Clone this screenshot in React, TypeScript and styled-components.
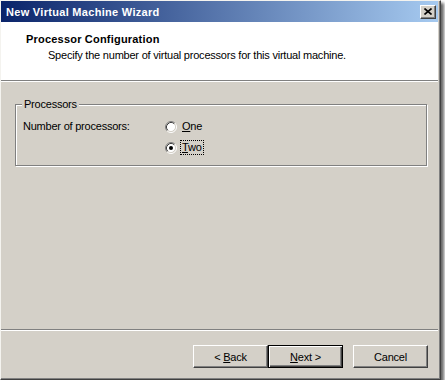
import * as React from 'react'
import styled, { createGlobalStyle } from 'styled-components'

const GlobalStyle = createGlobalStyle`
  html, body {
    margin: 0;
    padding: 0;
    background: #fff;
  }
  body {
    font-family: 'Liberation Sans', Arial, sans-serif;
    font-size: 11px;
    letter-spacing: -0.22px;
    color: #000;
  }
`

const Window = styled.div`
  width: 441px;
  height: 380px;
  box-sizing: border-box;
  display: flex;
  flex-direction: column;
  background: #d4d0c8;
  border-style: solid;
  border-width: 1px;
  border-color: #f4f3ef #404040 #404040 #f4f3ef;
  box-shadow: inset -1px -1px 0 #808080, 3px 3px 3px rgba(0, 0, 0, 0.6);
  padding: 0 2px 2px 0;
`
const TitleBar = styled.div`
  height: 21px;
  display: flex;
  align-items: center;
  justify-content: space-between;
  padding: 0 2px 0 5px;
  background: linear-gradient(to right, #0a246a, #a6caf0);
`
const TitleText = styled.span`
  color: #fff;
  font-weight: bold;
  font-size: 11px;
  letter-spacing: 0.3px;
`
const CloseButton = styled.div`
  width: 16px;
  height: 14px;
  box-sizing: border-box;
  display: flex;
  align-items: center;
  justify-content: center;
  background: #d4d0c8;
  border: 1px solid;
  border-color: #fff #404040 #404040 #fff;
  box-shadow: inset -1px -1px 0 #808080;
`
const Header = styled.div`
  height: 58px;
  box-sizing: border-box;
  background: #fff;
  padding: 11px 0 0 25px;
`
const HeaderTitle = styled.div`
  font-weight: bold;
  line-height: 13px;
  letter-spacing: 0.2px;
`
const HeaderSub = styled.div`
  line-height: 13px;
  margin: 3px 0 0 22px;
`
const Separator = styled.div`
  border-top: 1px solid #808080;
  border-bottom: 1px solid #fff;
`
const Body = styled.div`
  flex: 1;
  padding: 22px 11px 0 14px;
`
const Group = styled.div`
  position: relative;
  height: 62px;
  box-sizing: border-box;
  border: 1px solid #808080;
  box-shadow: inset 1px 1px 0 #fff, 1px 1px 0 #fff;
  display: grid;
  grid-template-columns: 142px 1fr;
  padding: 13px 0 0 7px;
`
const Legend = styled.span`
  position: absolute;
  top: -7px;
  left: 6px;
  padding: 0 2px;
  background: #d4d0c8;
  line-height: 13px;
`
const FieldLabel = styled.div`
  line-height: 17px;
`
const Options = styled.div`
  display: flex;
  flex-direction: column;
  gap: 4px;
`
const Option = styled.label`
  display: flex;
  align-items: center;
  height: 17px;
  gap: 4px;
`
const OptionText = styled.span<{ $focused?: boolean }>`
  line-height: 13px;
  padding: 0 1px;
  outline: ${(p) => (p.$focused ? '1px dotted #000' : 'none')};
`
const Footer = styled.div`
  display: flex;
  justify-content: flex-end;
  padding: 14px 10px 9px 0;
`
const Button = styled.div<{ $default?: boolean; $gap?: number }>`
  width: 75px;
  height: 23px;
  box-sizing: border-box;
  display: flex;
  align-items: center;
  justify-content: center;
  margin-left: ${(p) => p.$gap ?? 0}px;
  border: 1px solid;
  border-color: ${(p) => (p.$default ? '#000' : '#fff #404040 #404040 #fff')};
  box-shadow: ${(p) =>
    p.$default
      ? 'inset 1px 1px 0 #fff, inset -1px -1px 0 #404040, inset -2px -2px 0 #808080'
      : 'inset -1px -1px 0 #808080'};
`
const Key = styled.span`
  text-decoration: underline;
`

const Radio = ({ checked }: { checked?: boolean }) => (
  <svg width='12' height='12' viewBox='0 0 12 12'>
    <circle cx='6' cy='6' r='4.5' fill='#fff' />
    <path d='M2.11 9.89A5.5 5.5 0 0 1 9.89 2.11' stroke='#808080' fill='none' />
    <path d='M9.89 2.11A5.5 5.5 0 0 1 2.11 9.89' stroke='#fff' fill='none' />
    <path d='M2.82 9.18A4.5 4.5 0 0 1 9.18 2.82' stroke='#404040' fill='none' />
    <path d='M9.18 2.82A4.5 4.5 0 0 1 2.82 9.18' stroke='#d4d0c8' fill='none' />
    {checked ? <circle cx='6' cy='6' r='2' fill='#000' /> : null}
  </svg>
)

const App = () => {
  const [count, setCount] = React.useState(2)

  return (
    <>
      <GlobalStyle />
      <Window>
        <TitleBar>
          <TitleText>New Virtual Machine Wizard</TitleText>
          <CloseButton>
            <svg width='8' height='7' viewBox='0 0 8 7'>
              <path d='M0.5 0.5L7.5 6.5M7.5 0.5L0.5 6.5' stroke='#000' strokeWidth='1.6' />
            </svg>
          </CloseButton>
        </TitleBar>
        <Header>
          <HeaderTitle>Processor Configuration</HeaderTitle>
          <HeaderSub>Specify the number of virtual processors for this virtual machine.</HeaderSub>
        </Header>
        <Separator />
        <Body>
          <Group>
            <Legend>Processors</Legend>
            <FieldLabel>Number of processors:</FieldLabel>
            <Options>
              <Option onClick={() => setCount(1)}>
                <Radio checked={count === 1} />
                <OptionText $focused={count === 1}>
                  <Key>O</Key>ne
                </OptionText>
              </Option>
              <Option onClick={() => setCount(2)}>
                <Radio checked={count === 2} />
                <OptionText $focused={count === 2}>
                  <Key>T</Key>wo
                </OptionText>
              </Option>
            </Options>
          </Group>
        </Body>
        <Separator />
        <Footer>
          <Button>
            &lt;&nbsp;<Key>B</Key>ack
          </Button>
          <Button $default>
            <Key>N</Key>ext&nbsp;&gt;
          </Button>
          <Button $gap={10}>Cancel</Button>
        </Footer>
      </Window>
    </>
  )
}

export default App
